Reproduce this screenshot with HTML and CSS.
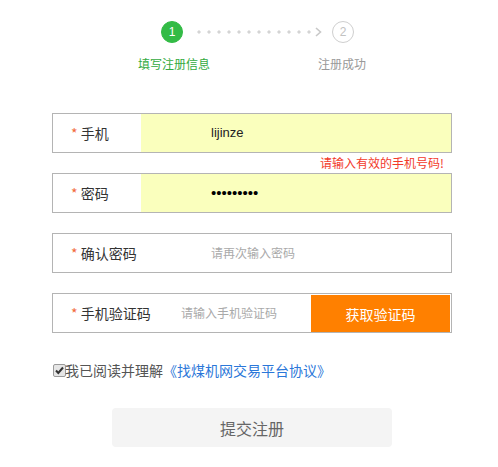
FILE: index.html
```html
<!DOCTYPE html>
<html lang="zh-CN">
<head>
<meta charset="utf-8">
<title>注册</title>
<link rel="stylesheet" href="styles.css">
</head>
<body>
<div class="page">
  <div class="steps">
    <div class="step-track">
      <span class="circle active">1</span>
      <span class="dots"></span>
      <svg class="chev" width="7" height="10" viewBox="0 0 7 10"><polyline points="1,1 5.5,5 1,9" fill="none" stroke="#c8c8c8" stroke-width="1.6"/></svg>
      <span class="circle">2</span>
    </div>
    <div class="step-labels">
      <span class="step-label active">填写注册信息</span>
      <span class="step-label">注册成功</span>
    </div>
  </div>

  <form class="form">
    <div class="row">
      <label class="label"><span class="star">*</span> 手机</label>
      <div class="input filled">lijinze</div>
    </div>
    <div class="error">请输入有效的手机号码!</div>
    <div class="row">
      <label class="label"><span class="star">*</span> 密码</label>
      <div class="input filled dots-text">•••••••••</div>
    </div>
    <div class="row gap">
      <label class="label"><span class="star">*</span> 确认密码</label>
      <div class="input placeholder">请再次输入密码</div>
    </div>
    <div class="row gap">
      <label class="label"><span class="star">*</span> 手机验证码</label>
      <div class="input placeholder short">请输入手机验证码</div>
      <button type="button" class="code-btn">获取验证码</button>
    </div>
    <div class="agree">
      <span class="check"><svg width="13" height="13" viewBox="0 0 13 13"><rect x="0.5" y="0.5" width="12" height="12" rx="1.5" fill="#e6e6e6" stroke="#9a9a9a"/><polyline points="3,6.5 5.3,9 10,3.5" fill="none" stroke="#333" stroke-width="2"/></svg></span>
      <span class="agree-text">我已阅读并理解</span><a class="link" href="#">《找煤机网交易平台协议》</a>
    </div>
    <div class="submit-wrap">
      <button type="button" class="submit">提交注册</button>
    </div>
  </form>
</div>
</body>
</html>
```
FILE: styles.css
```css
* { box-sizing: border-box; }
html, body { margin: 0; padding: 0; background: #fff; }
body {
  font-family: "Noto Sans CJK SC", "Noto Sans", "Liberation Sans", sans-serif;
  color: #333;
}
.page { width: 498px; }

.steps { padding-top: 21px; }
.step-track {
  display: flex;
  align-items: center;
  margin-left: 161px;
  height: 22px;
}
.circle {
  width: 22px;
  height: 22px;
  border-radius: 50%;
  border: 1px solid #cfcfcf;
  color: #c2c2c2;
  font-size: 12px;
  line-height: 20px;
  text-align: center;
  font-family: "Liberation Sans", sans-serif;
}
.circle.active {
  background: #33bb46;
  border-color: #33bb46;
  color: #fff;
}
.dots {
  width: 120px;
  height: 4px;
  margin-left: 11px;
  background-image: radial-gradient(circle, #d4d4d4 1.3px, transparent 1.9px);
  background-size: 10px 4px;
}
.chev { margin-left: 1px; margin-right: 10px; }

.step-labels {
  display: flex;
  margin-top: 12px;
  margin-left: 138px;
  font-size: 12px;
  line-height: 17px;
}
.step-label { color: #999; }
.step-label.active { color: #33aa40; width: 180px; }

.form { margin: 41px 0 0 52px; width: 400px; }
.row {
  display: flex;
  align-items: stretch;
  height: 40px;
  border: 1px solid #b4b4b4;
}
.row.gap { margin-top: 20px; }
.label {
  width: 88px;
  padding-left: 18px;
  font-size: 14px;
  line-height: 38px;
  color: #333;
  white-space: nowrap;
}
.star { color: #f26a3b; }
.input {
  flex: 1;
  padding-left: 70px;
  font-size: 13px;
  line-height: 38px;
  color: #222;
  font-family: "Liberation Sans", "Noto Sans CJK SC", sans-serif;
}
.input.filled { background: #faffbd; }
.input.dots-text { font-size: 15px; color: #000; }
.input.placeholder {
  color: #a9a9a9;
  font-size: 12px;
  font-family: "Noto Sans CJK SC", sans-serif;
}
.input.short { padding-left: 40px; }
.code-btn {
  width: 139px;
  margin: 1px 1px 0 0;
  height: 37px;
  border: none;
  background: #ff8000;
  color: #fff;
  font-family: "Noto Sans CJK SC", sans-serif;
  font-size: 14px;
  padding: 0;
}
.error {
  height: 20px;
  line-height: 20px;
  text-align: right;
  padding-right: 8px;
  font-size: 12px;
  color: #f23a2a;
}
.agree {
  display: flex;
  align-items: center;
  margin-top: 28px;
  height: 18px;
  font-size: 14px;
  line-height: 18px;
}
.check { display: flex; margin-left: 1px; margin-right: -1px; }
.agree-text { color: #555; }
.link { color: #2b77d9; text-decoration: none; }

.submit-wrap { margin-top: 29px; padding-left: 60px; }
.submit {
  width: 280px;
  height: 39px;
  border: none;
  border-radius: 4px;
  background: #f4f4f4;
  color: #666;
  font-family: "Noto Sans CJK SC", sans-serif;
  font-size: 16px;
  padding: 0;
}
```
